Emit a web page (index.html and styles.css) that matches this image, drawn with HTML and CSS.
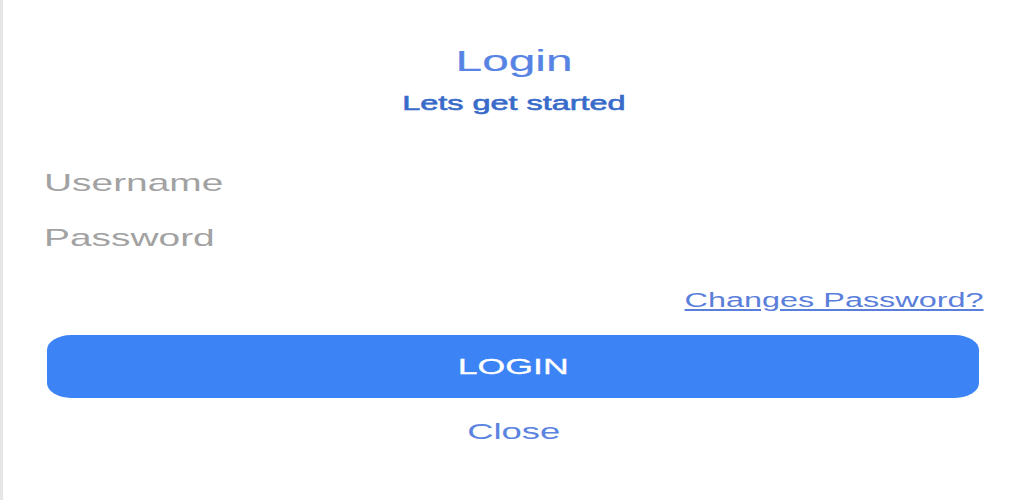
FILE: index.html
```html
<!DOCTYPE html>
<html lang="en">
<head>
<meta charset="utf-8">
<title>Login</title>
<link rel="stylesheet" href="styles.css">
</head>
<body>
<div class="page">
  <header class="head">
    <h1 class="title"><span class="wide mid">Login</span></h1>
    <p class="subtitle"><span class="wide mid">Lets get started</span></p>
  </header>
  <div class="fields">
    <div class="field"><span class="wide left">Username</span></div>
    <div class="field"><span class="wide left">Password</span></div>
  </div>
  <div class="forgot-row">
    <a class="forgot" href="#"><span class="wide right">Changes Password?</span></a>
  </div>
  <button class="login-btn" type="button"><span class="wide mid">LOGIN</span></button>
  <div class="close-row"><span class="close wide mid">Close</span></div>
</div>
</body>
</html>
```

FILE: styles.css
```css
html, body {
  margin: 0;
  padding: 0;
  background: #ffffff;
}

body {
  font-family: "Liberation Sans", Arial, sans-serif;
}

.page {
  height: 500px;
  box-sizing: border-box;
  border-left: 3px solid #e6e6e6;
  padding: 43px 40px 0 41px;
  display: flex;
  flex-direction: column;
}

.wide {
  display: inline-block;
  transform: scaleX(1.62);
  white-space: nowrap;
}
.wide.mid { transform-origin: center; }
.wide.left { transform-origin: left; }
.wide.right { transform-origin: right; }

.head {
  display: flex;
  flex-direction: column;
  align-items: center;
}

.title {
  margin: 0;
  font-size: 29.5px;
  line-height: 36px;
  font-weight: normal;
  color: #5784e4;
  -webkit-text-stroke: 0.2px #5784e4;
}

.subtitle {
  margin: 12px 0 0;
  font-size: 20px;
  line-height: 24px;
  font-weight: normal;
  color: #386bc9;
  -webkit-text-stroke: 0.6px #386bc9;
}

.fields {
  margin-top: 53px;
  display: flex;
  flex-direction: column;
  gap: 25px;
}

.field {
  font-size: 24px;
  line-height: 30px;
  color: #a2a2a2;
}

.forgot-row {
  margin-top: 35px;
  display: flex;
  justify-content: flex-end;
}

.forgot {
  font-size: 20px;
  line-height: 24px;
  color: #5a7fdb;
}

.forgot .wide {
  text-decoration: underline;
  text-underline-offset: 2px;
}

.login-btn {
  margin: 23px 5px 0 3px;
  height: 63px;
  border: none;
  border-radius: 24px / 15px;
  background: #3c83f6;
  color: #ffffff;
  font-family: "Liberation Sans", Arial, sans-serif;
  font-size: 22px;
  line-height: 63px;
  padding: 0;
  display: flex;
  justify-content: center;
  align-items: center;
  -webkit-text-stroke: 0.3px #ffffff;
}

.close-row {
  margin-top: 20px;
  display: flex;
  justify-content: center;
}

.close {
  font-size: 22.5px;
  line-height: 28px;
  color: #5a84e0;
}
```
